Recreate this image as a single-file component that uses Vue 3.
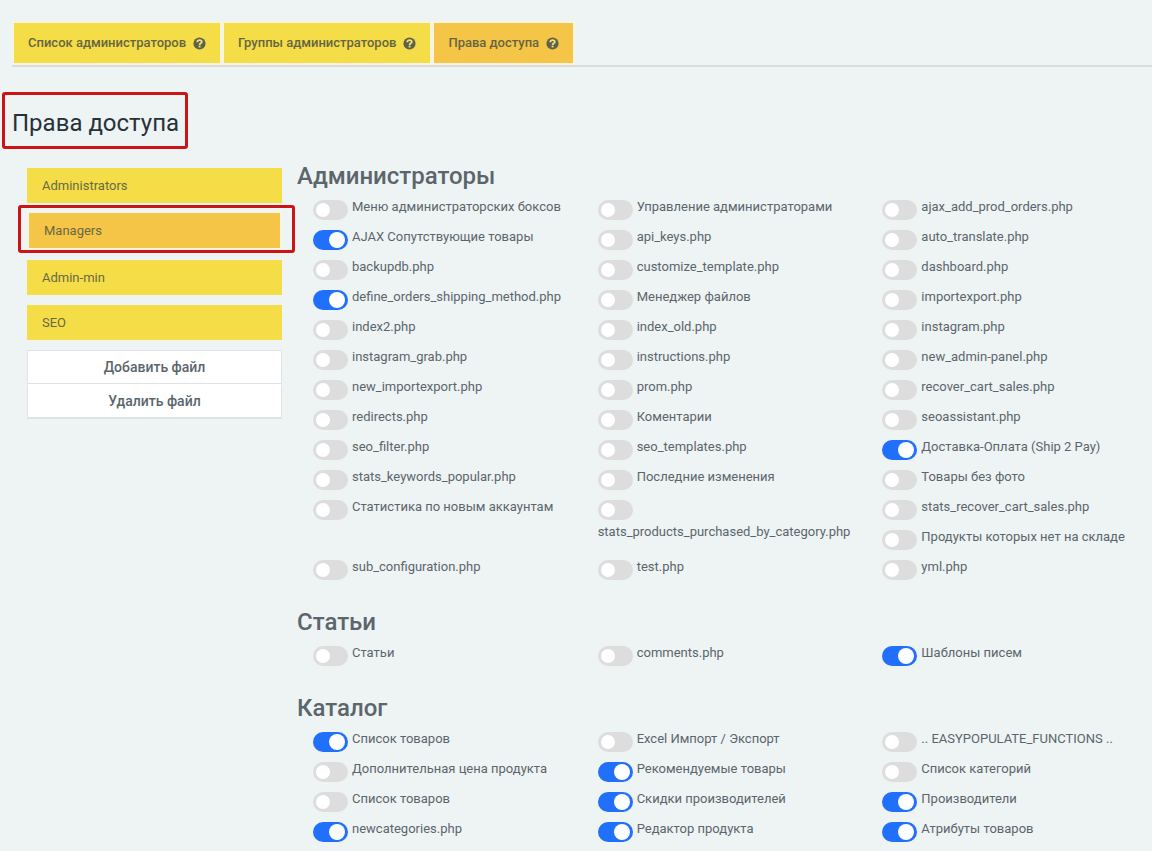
<script setup>
import { ref, reactive } from 'vue'

const tabs = ['Список администраторов', 'Группы администраторов', 'Права доступа']
const activeTab = ref(2)

const groups = ['Administrators', 'Managers', 'Admin-min', 'SEO']
const activeGroup = ref('Managers')

const item = (name, on = false, tall = false) => ({ name, on, tall })

const sections = reactive([
  {
    title: 'Администраторы',
    items: [
      item('Меню администраторских боксов'),
      item('Управление администраторами'),
      item('ajax_add_prod_orders.php'),
      item('AJAX Сопутствующие товары', true),
      item('api_keys.php'),
      item('auto_translate.php'),
      item('backupdb.php'),
      item('customize_template.php'),
      item('dashboard.php'),
      item('define_orders_shipping_method.php', true),
      item('Менеджер файлов'),
      item('importexport.php'),
      item('index2.php'),
      item('index_old.php'),
      item('instagram.php'),
      item('instagram_grab.php'),
      item('instructions.php'),
      item('new_admin-panel.php'),
      item('new_importexport.php'),
      item('prom.php'),
      item('recover_cart_sales.php'),
      item('redirects.php'),
      item('Коментарии'),
      item('seoassistant.php'),
      item('seo_filter.php'),
      item('seo_templates.php'),
      item('Доставка-Оплата (Ship 2 Pay)', true),
      item('stats_keywords_popular.php'),
      item('Последние изменения'),
      item('Товары без фото'),
      item('Статистика по новым аккаунтам', false, true),
      item('stats_products_purchased_by_category.php', false, true),
      item('stats_recover_cart_sales.php'),
      item('Продукты которых нет на складе'),
      item('sub_configuration.php'),
      item('test.php'),
      item('yml.php'),
    ],
  },
  {
    title: 'Статьи',
    items: [item('Статьи'), item('comments.php'), item('Шаблоны писем', true)],
  },
  {
    title: 'Каталог',
    items: [
      item('Список товаров', true),
      item('Excel Импорт / Экспорт'),
      item('.. EASYPOPULATE_FUNCTIONS ..'),
      item('Дополнительная цена продукта'),
      item('Рекомендуемые товары', true),
      item('Список категорий'),
      item('Список товаров'),
      item('Скидки производителей', true),
      item('Производители', true),
      item('newcategories.php', true),
      item('Редактор продукта', true),
      item('Атрибуты товаров', true),
    ],
  },
])
</script>

<template>
  <div class="page">
    <nav class="tabs">
      <a
        v-for="(tab, i) in tabs"
        :key="tab"
        href="#"
        class="tab"
        :class="{ active: i === activeTab }"
        @click.prevent="activeTab = i"
      >
        <span>{{ tab }}</span>
        <svg class="help" viewBox="0 0 12 12" aria-hidden="true">
          <circle cx="6" cy="6" r="5.6" fill="currentColor" />
          <path class="mark" d="M3.9 4.8C4 3.4 4.9 2.9 6 2.9s2.1.6 2.1 1.7C8.1 5.9 6.1 5.8 6.1 7.3" />
          <rect class="dot" x="5.2" y="8" width="1.8" height="1.6" />
        </svg>
      </a>
    </nav>

    <h1 class="title">Права доступа</h1>

    <div class="layout">
      <aside class="sidebar">
        <a
          v-for="g in groups"
          :key="g"
          href="#"
          class="group"
          :class="{ active: g === activeGroup }"
          @click.prevent="activeGroup = g"
        >{{ g }}</a>
        <div class="actions">
          <button type="button" class="action">Добавить файл</button>
          <button type="button" class="action">Удалить файл</button>
        </div>
      </aside>

      <main class="content">
        <section v-for="s in sections" :key="s.title" class="section">
          <h2 class="heading">{{ s.title }}</h2>
          <div class="grid">
            <label v-for="(it, i) in s.items" :key="i" class="item" :class="{ tall: it.tall }">
              <input v-model="it.on" type="checkbox" class="switch" />
              <span>{{ it.name }}</span>
            </label>
          </div>
        </section>
      </main>
    </div>
  </div>
</template>

<style>
body {
  background: #eef3f4;
}
</style>

<style scoped>
.page {
  box-sizing: border-box;
  padding-top: 21px;
  font-family: Roboto, "Liberation Sans", sans-serif;
  font-size: 13px;
  line-height: 20px;
  color: #5b666c;
}
.tabs {
  display: flex;
  margin-left: 12px;
  border-bottom: 2px solid #d9dbdd;
}
.tab {
  display: flex;
  align-items: center;
  gap: 7px;
  padding: 10px 14px;
  border: 2px solid #f7f5e2;
  background: #f4dd47;
  color: #666544;
  font-weight: 500;
  text-decoration: none;
}
.tab.active {
  background: #f4c546;
}
.help {
  width: 13px;
  height: 13px;
  color: #5d624f;
}
.mark {
  fill: none;
  stroke: #f4e06a;
  stroke-width: 1.7;
}
.dot {
  fill: #f4e06a;
}
.title {
  position: relative;
  width: max-content;
  margin: 41px 0 30px 12px;
  font-size: 24px;
  line-height: 30px;
  font-weight: 400;
  color: #263238;
}
.title::after,
.group.active::after {
  content: "";
  position: absolute;
  border: 3px solid #cc1417;
  border-radius: 3px;
  pointer-events: none;
}
.title::after {
  inset: -16px -9px -11px -10px;
}
.layout {
  display: flex;
  align-items: flex-start;
  gap: 15px;
  padding-left: 27px;
}
.sidebar {
  flex: 0 0 255px;
  display: flex;
  flex-direction: column;
  gap: 10px;
}
.group {
  position: relative;
  padding: 8px 15px 7px;
  background: #f4dd47;
  color: #6b6845;
  text-decoration: none;
}
.group.active {
  margin-top: -2px;
  border: 2px solid #f7f5e6;
  background: #f4c546;
}
.group.active::after {
  inset: -8px -15px -5px -11px;
}
.actions {
  display: flex;
  flex-direction: column;
}
.action {
  height: 34px;
  padding: 0;
  border: 1px solid #dfe3e5;
  background: #fff;
  color: #5b666c;
  font-family: inherit;
  font-size: 14px;
  font-weight: 500;
  box-shadow: 0 1px 0 #dfe3e5;
}
.action + .action {
  border-top-color: #fff;
}
.content {
  flex: 1;
  min-width: 0;
}
.section {
  margin-bottom: 20px;
}
.section:first-child {
  margin-top: -7px;
}
.section:last-child {
  margin-bottom: 0;
}
.heading {
  margin: 0 0 6px;
  font-size: 24px;
  line-height: 30px;
  font-weight: 500;
}
.grid {
  display: grid;
  grid-template-columns: repeat(3, minmax(0, 1fr));
  grid-auto-rows: 30px;
  column-gap: 15px;
  padding-left: 16px;
}
.item {
  display: flex;
  flex-wrap: wrap;
  align-items: flex-start;
  align-content: flex-start;
}
.item.tall {
  grid-row: span 2;
}
.switch {
  appearance: none;
  position: relative;
  flex: none;
  width: 35px;
  height: 20px;
  margin: 3px 4px 2px 0;
  border-radius: 10px;
  background: #ddd;
}
.switch::before {
  content: "";
  position: absolute;
  top: 3px;
  left: 3px;
  width: 14px;
  height: 14px;
  border-radius: 50%;
  background: #fff;
}
.switch:checked {
  background: #2170fb;
}
.switch:checked::before {
  top: 2px;
  left: 16px;
  width: 16px;
  height: 16px;
}
</style>
